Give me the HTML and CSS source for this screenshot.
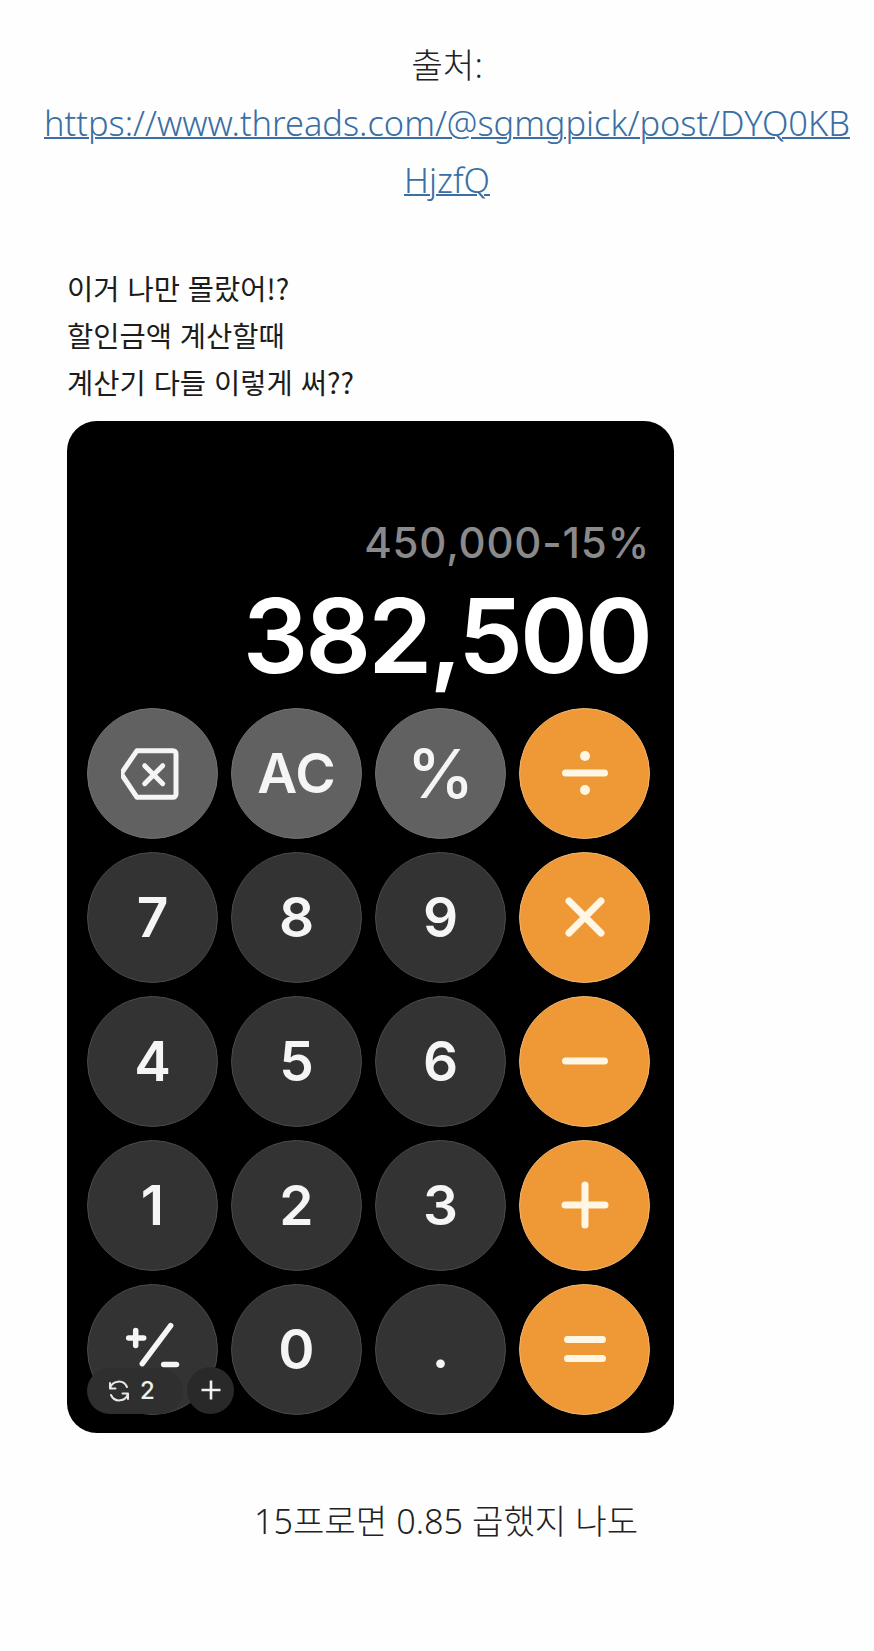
FILE: index.html
```html
<!DOCTYPE html>
<html lang="ko">
<head>
    <meta charset="UTF-8">
    <title>출처</title>
    <link rel="stylesheet" href="styles.css">
</head>
<body>
<div class="source">
    <p class="source-title">출처:</p>
    <a class="source-link" href="#">https://www.threads.com/@sgmgpick/post/DYQ0KBHjzfQ</a>
</div>
<div class="post">
    <p>이거 나만 몰랐어!?</p>
    <p>할인금액 계산할때</p>
    <p>계산기 다들 이렇게 써??</p>
</div>
<div class="calc">
    <div class="expr">450,000-15%</div>
    <div class="result">382,500</div>
    <div class="keys">
        <div class="key fn">
            <svg class="op back" viewBox="0 0 60 60"><path class="thin" d="M16 7.700H52a3 3 0 0 1 3 3V51.300a3 3 0 0 1-3 3H16L1.800 33.200Q0 30.700 1.800 28.200Z"/><path class="thin" d="M23.700 22.700l18 18M41.700 22.700l-18 18"/></svg>
        </div>
        <div class="key fn">AC</div>
        <div class="key fn pct">%</div>
        <div class="key orange">
            <svg class="op" viewBox="0 0 60 60"><path d="M10.500 30H49.500"/><circle cx="30" cy="13" r="5"/><circle cx="30" cy="47" r="5"/></svg>
        </div>

        <div class="key">7</div>
        <div class="key">8</div>
        <div class="key">9</div>
        <div class="key orange">
            <svg class="op" viewBox="0 0 60 60"><path d="M14 14L46 46M46 14L14 46"/></svg>
        </div>

        <div class="key">4</div>
        <div class="key">5</div>
        <div class="key">6</div>
        <div class="key orange">
            <svg class="op" viewBox="0 0 60 60"><path d="M10.500 30H49.500"/></svg>
        </div>

        <div class="key">1</div>
        <div class="key">2</div>
        <div class="key">3</div>
        <div class="key orange">
            <svg class="op" viewBox="0 0 60 60"><path d="M10 30H50M30 10V50"/></svg>
        </div>

        <div class="key">
            <svg class="op" viewBox="0 0 60 60"><path class="mid" d="M5.700 19H20.700M12.700 11.500V26.500"/><path class="mid" d="M47.700 6.700L19.300 44.700"/><path class="mid" d="M40.700 45.500H53.500"/></svg>
        </div>
        <div class="key">0</div>
        <div class="key dot">.</div>
        <div class="key orange">
            <svg class="op" viewBox="0 0 60 60"><path d="M12.500 20.500H47.500M12.500 39.500H47.500"/></svg>
        </div>
    </div>
    <div class="repost">
        <svg class="repost-icon" viewBox="0 0 24 24"><path d="M3 9.500A9 9 0 0 1 20 8M3 4V9.500H8.500M21 14.500A9 9 0 0 1 4 16M21 20V14.500H15.500"/></svg>
        <span>2</span>
    </div>
    <div class="add">
        <svg viewBox="0 0 24 24"><path d="M12 2.500V21.500M2.500 12H21.500"/></svg>
    </div>
</div>
<p class="comment">15프로면 0.85 곱했지 나도</p>
</body>
</html>
```

FILE: styles.css
```css
* {
    margin: 0;
    padding: 0;
    box-sizing: border-box;
}

body {
    background: #fefefe;
    color: #222;
    font-family: "Noto Sans", "Noto Sans CJK KR", sans-serif;
}

.source {
    padding: 36px 20px 0 40px;
    font-size: 34.400px;
    line-height: 57.500px;
    font-weight: 300;
    text-align: center;
}

.source-link {
    display: block;
    color: #3a6ea5;
    text-decoration: underline;
    text-decoration-thickness: 2px;
    word-break: break-all;
}

.post {
    margin: 55px 0 0 67px;
    font-family: "Noto Sans CJK KR", sans-serif;
    font-size: 28.500px;
    line-height: 47px;
    font-weight: 400;
    color: #1c1c1c;
}

.calc {
    position: relative;
    width: 607px;
    height: 1012px;
    margin: 16px 0 0 67px;
    padding: 0 24px 18px 20px;
    background: #000;
    border-radius: 30px;
    display: flex;
    flex-direction: column;
    justify-content: flex-end;
    font-family: Inter, "Liberation Sans", sans-serif;
}

.expr {
    text-align: right;
    font-size: 42px;
    line-height: 50px;
    font-weight: 500;
    letter-spacing: 0.800px;
    color: #8a8a8c;
    margin-bottom: 5px;
}

.result {
    text-align: right;
    font-size: 103px;
    line-height: 125px;
    font-weight: 600;
    letter-spacing: -3px;
    color: #fff;
    margin-bottom: 10px;
}

.keys {
    display: grid;
    grid-template-columns: repeat(4, 131px);
    grid-auto-rows: 131px;
    gap: 13px;
}

.key {
    display: flex;
    align-items: center;
    justify-content: center;
    border-radius: 50%;
    background: #333;
    border: 1px solid #4a4a4a;
    color: #f5f5f5;
    font-size: 55px;
    font-weight: 600;
}

.key.fn {
    background: #616161;
    border-color: #727272;
}

.key.pct {
    font-size: 68px;
    font-weight: 500;
}

.key.dot {
    padding-bottom: 3px;
}

.key.orange {
    background: #ee9836;
    border-color: #f3b878;
}

.op {
    width: 60px;
    height: 60px;
    fill: none;
    stroke: #fff6e4;
    stroke-width: 7;
    stroke-linecap: round;
    stroke-linejoin: round;
}

.op circle {
    fill: #fff6e4;
    stroke: none;
}

.key:not(.orange) .op {
    stroke: #f5f5f5;
}

.op.back {
    margin-right: 4px;
}

.op .thin {
    stroke-width: 5;
}

.op .mid {
    stroke-width: 5.500;
}

.repost {
    position: absolute;
    left: 20px;
    bottom: 19px;
    width: 96px;
    height: 46px;
    padding-left: 20px;
    display: flex;
    align-items: center;
    gap: 9px;
    border-radius: 23px;
    background: #2f2f2f;
    color: #f0f0f0;
    font-size: 24px;
    font-weight: 500;
}

.repost-icon {
    width: 24px;
    height: 24px;
    fill: none;
    stroke: #e8e8e8;
    stroke-width: 2;
    stroke-linecap: round;
    stroke-linejoin: round;
}

.add {
    position: absolute;
    left: 120px;
    bottom: 19px;
    width: 47px;
    height: 47px;
    display: flex;
    align-items: center;
    justify-content: center;
    border-radius: 50%;
    background: #292929;
}

.add svg {
    width: 24px;
    height: 24px;
    fill: none;
    stroke: #f0f0f0;
    stroke-width: 2.600;
}

.comment {
    margin-top: 64px;
    padding: 0 20px 0 38px;
    text-align: center;
    font-size: 34.200px;
    line-height: 48px;
    font-weight: 300;
    color: #222;
}
```
